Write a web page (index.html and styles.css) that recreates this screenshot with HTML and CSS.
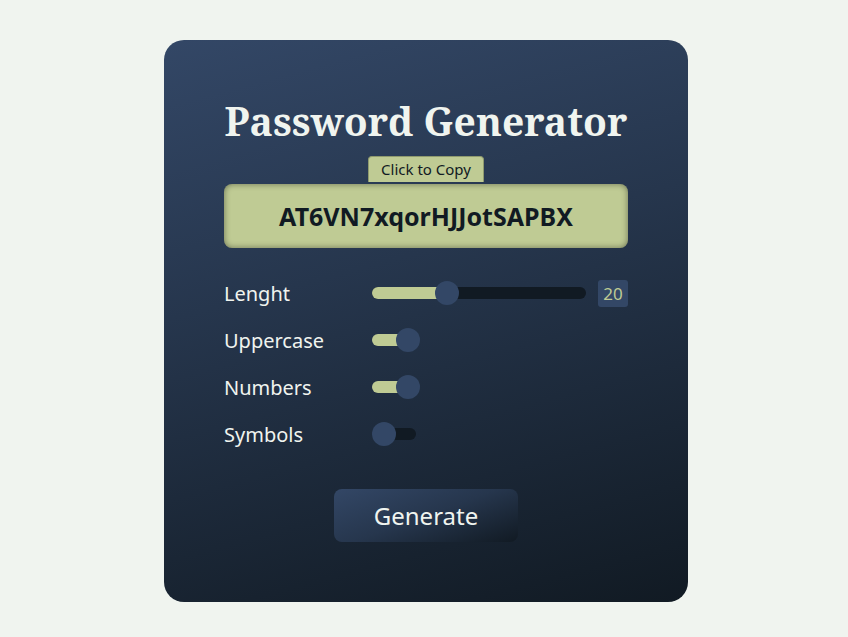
FILE: index.html
```html
<!DOCTYPE html>
<html lang="en">
<head>
<meta charset="utf-8">
<title>Password Generator</title>
<link rel="stylesheet" href="styles.css">
</head>
<body>
<main class="card">
  <h1 class="title">Password Generator</h1>
  <div class="output">
    <span class="copy-tab">Click to Copy</span>
    <div class="password">AT6VN7xqorHJJotSAPBX</div>
  </div>
  <div class="settings">
    <div class="row">
      <span class="label">Lenght</span>
      <div class="slider">
        <div class="track"><div class="fill" style="width:35%"></div><div class="thumb" style="left:35%"></div></div>
      </div>
      <span class="value">20</span>
    </div>
    <div class="row">
      <span class="label">Uppercase</span>
      <div class="toggle on"><div class="thumb"></div></div>
    </div>
    <div class="row">
      <span class="label">Numbers</span>
      <div class="toggle on"><div class="thumb"></div></div>
    </div>
    <div class="row">
      <span class="label">Symbols</span>
      <div class="toggle"><div class="thumb"></div></div>
    </div>
  </div>
  <div class="actions">
    <button class="generate">Generate</button>
  </div>
</main>
</body>
</html>
```
FILE: styles.css
```css
* { box-sizing: border-box; }
html, body { margin: 0; padding: 0; }
body {
  background: #f0f4ef;
  font-family: "Noto Sans", "Open Sans", sans-serif;
  display: flex;
  justify-content: center;
  padding: 40px 0 0 4px;
  height: 637px;
  overflow: hidden;
}
.card {
  width: 524px;
  height: 562px;
  border-radius: 20px;
  background: linear-gradient(165deg, #334766 0%, #26364d 40%, #111a23 100%);
  padding: 54px 60px 0;
  display: flex;
  flex-direction: column;
}
.title {
  margin: 0;
  font-family: "Noto Serif", "DejaVu Serif", serif;
  font-weight: 700;
  font-size: 39px;
  line-height: 54px;
  color: #f0f4ef;
  text-align: center;
  white-space: nowrap;
}
.output {
  margin-top: 8px;
  display: flex;
  flex-direction: column;
  align-items: center;
}
.copy-tab {
  width: 116px;
  height: 26px;
  background: #bfcb94;
  color: #111a23;
  border: 1px solid #8f9a6e;
  border-bottom: none;
  border-radius: 4px 4px 0 0;
  font-size: 15px;
  line-height: 25px;
  text-align: center;
}
.password {
  width: 404px;
  height: 64px;
  margin-top: 2px;
  background: #bfcb94;
  border-radius: 8px;
  box-shadow: 0 0 6px rgba(0,0,0,0.45) inset;
  color: #111a23;
  font-size: 25px;
  font-weight: 700;
  line-height: 64px;
  text-align: center;
}
.settings {
  margin-top: 28px;
  display: flex;
  flex-direction: column;
  gap: 13px;
}
.row {
  display: flex;
  align-items: center;
  height: 34px;
}
.label {
  width: 148px;
  color: #f0f4ef;
  font-size: 20px;
}
.slider { width: 214px; }
.track {
  position: relative;
  height: 12px;
  background: #111a23;
  border-radius: 6px;
}
.fill {
  height: 12px;
  background: #bfcb94;
  border-radius: 6px 0 0 6px;
}
.track .thumb {
  position: absolute;
  top: -6px;
  width: 24px;
  height: 24px;
  margin-left: -12px;
  border-radius: 50%;
  background: #334766;
}
.value {
  margin-left: 12px;
  width: 30px;
  height: 27px;
  background: #334766;
  border-radius: 3px;
  color: #bfcb94;
  font-size: 17px;
  line-height: 27px;
  text-align: center;
}
.toggle {
  position: relative;
  width: 44px;
  height: 12px;
  border-radius: 6px;
  background: #111a23;
}
.toggle.on { background: linear-gradient(90deg, #bfcb94 60%, #111a23 60%); }
.toggle .thumb {
  position: absolute;
  top: -6px;
  left: 0;
  width: 24px;
  height: 24px;
  border-radius: 50%;
  background: #334766;
}
.toggle.on .thumb { left: 24px; }
.actions {
  margin-top: 38px;
  display: flex;
  justify-content: center;
}
.generate {
  width: 184px;
  height: 53px;
  border: none;
  border-radius: 8px;
  background: linear-gradient(160deg, #334766 0%, #26364d 50%, #111a23 100%);
  color: #f0f4ef;
  font-family: "Noto Sans", "Open Sans", sans-serif;
  font-size: 24px;
  cursor: pointer;
}
```
